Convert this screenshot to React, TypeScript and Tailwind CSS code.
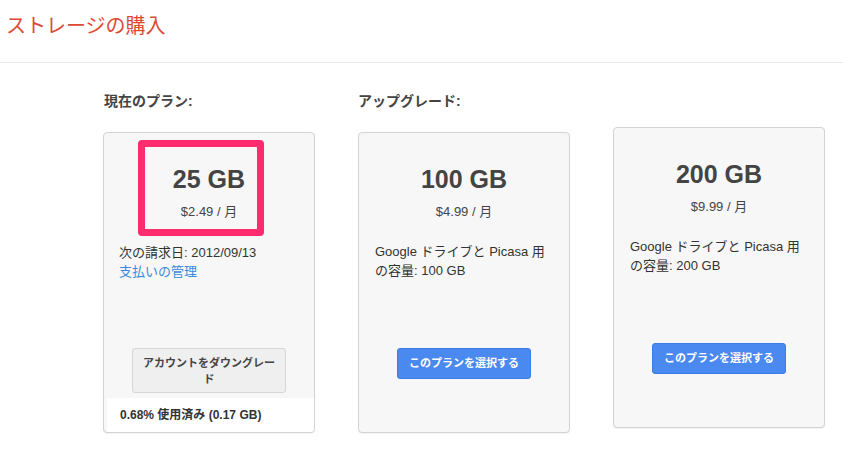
import React from "react";

const font = { fontFamily: '"Liberation Sans", Arial, "Noto Sans CJK JP", sans-serif' };

type Plan = { size: string; price: string; amount: string };

function PlanCard({ size, price, amount }: Plan) {
  return (
    <div className="flex h-[301px] w-[212px] flex-col rounded-[4px] border border-[#d3d3d3] bg-[#f7f7f7] pt-[31px] shadow-[0_1px_1px_rgba(0,0,0,0.05)]">
      <div className="h-[184px]">
        <div className="text-center text-[25px] font-bold leading-[30px] text-[#444]">{size}</div>
        <div className="mt-[9px] text-center text-[13px] leading-[18px] text-[#444]">{price}</div>
        <div className="mt-[21px] px-[16px] text-[13px] leading-[19px] text-[#333]">
          Google ドライブと Picasa 用
          <br />
          の容量: {amount}
        </div>
      </div>
      <div className="flex justify-center">
        <button className="h-[31px] w-[134px] rounded-[3px] border border-[#3b7de6] bg-[#4a89f0] text-[11px] font-bold text-white">
          このプランを選択する
        </button>
      </div>
    </div>
  );
}

export default function App() {
  return (
    <div className="min-h-[452px] w-full bg-white" style={font}>
      <div className="h-[63px] border-b border-[#e6e6e6] pl-[6px] pt-[12px]">
        <h1 className="text-[20px] leading-[28px] text-[#dc4a36]">ストレージの購入</h1>
      </div>

      <div className="flex gap-[43px] pl-[103px] pt-[28px]">
        {/* current plan */}
        <div className="flex flex-col">
          <div className="mb-[21px] h-[20px] pl-[1px] text-[14px] font-bold leading-[20px] text-[#444]">現在のプラン:</div>
          <div className="relative flex h-[301px] w-[212px] flex-col rounded-[4px] border border-[#d3d3d3] bg-[#f7f7f7] pt-[31px] shadow-[0_1px_1px_rgba(0,0,0,0.05)]">
            <div className="h-[184px]">
              <div className="text-center text-[25px] font-bold leading-[30px] text-[#444]">25 GB</div>
              <div className="mt-[9px] text-center text-[13px] leading-[18px] text-[#444]">$2.49 / 月</div>
              <div className="mt-[22px] px-[15px] text-[13px] leading-[19px] text-[#333]">
                次の請求日: 2012/09/13
                <br />
                <a className="text-[#3a8ae0]">支払いの管理</a>
              </div>
            </div>
            <div className="flex justify-center">
              <button className="h-[45px] w-[154px] rounded-[3px] border border-[#d6d6d6] bg-[#efefef] px-[10px] text-[11px] font-bold leading-[16px] text-[#444]">
                アカウントをダウングレード
              </button>
            </div>
            <div className="ml-[3px] mt-auto flex h-[34px] items-center rounded-br-[4px] bg-white pl-[13px] text-[12px] font-bold text-[#333]">
              0.68% 使用済み (0.17 GB)
            </div>
            <div className="absolute left-[34px] top-[7px] h-[96px] w-[126px] rounded-[4px] border-[7px] border-[#fe2c6f]" />
          </div>
        </div>

        {/* upgrade */}
        <div className="flex flex-col">
          <div className="mb-[21px] h-[20px] text-[14px] font-bold leading-[20px] text-[#444]">アップグレード:</div>
          <PlanCard size="100 GB" price="$4.99 / 月" amount="100 GB" />
        </div>

        <div className="flex flex-col pt-[36px]">
          <PlanCard size="200 GB" price="$9.99 / 月" amount="200 GB" />
        </div>
      </div>
    </div>
  );
}
